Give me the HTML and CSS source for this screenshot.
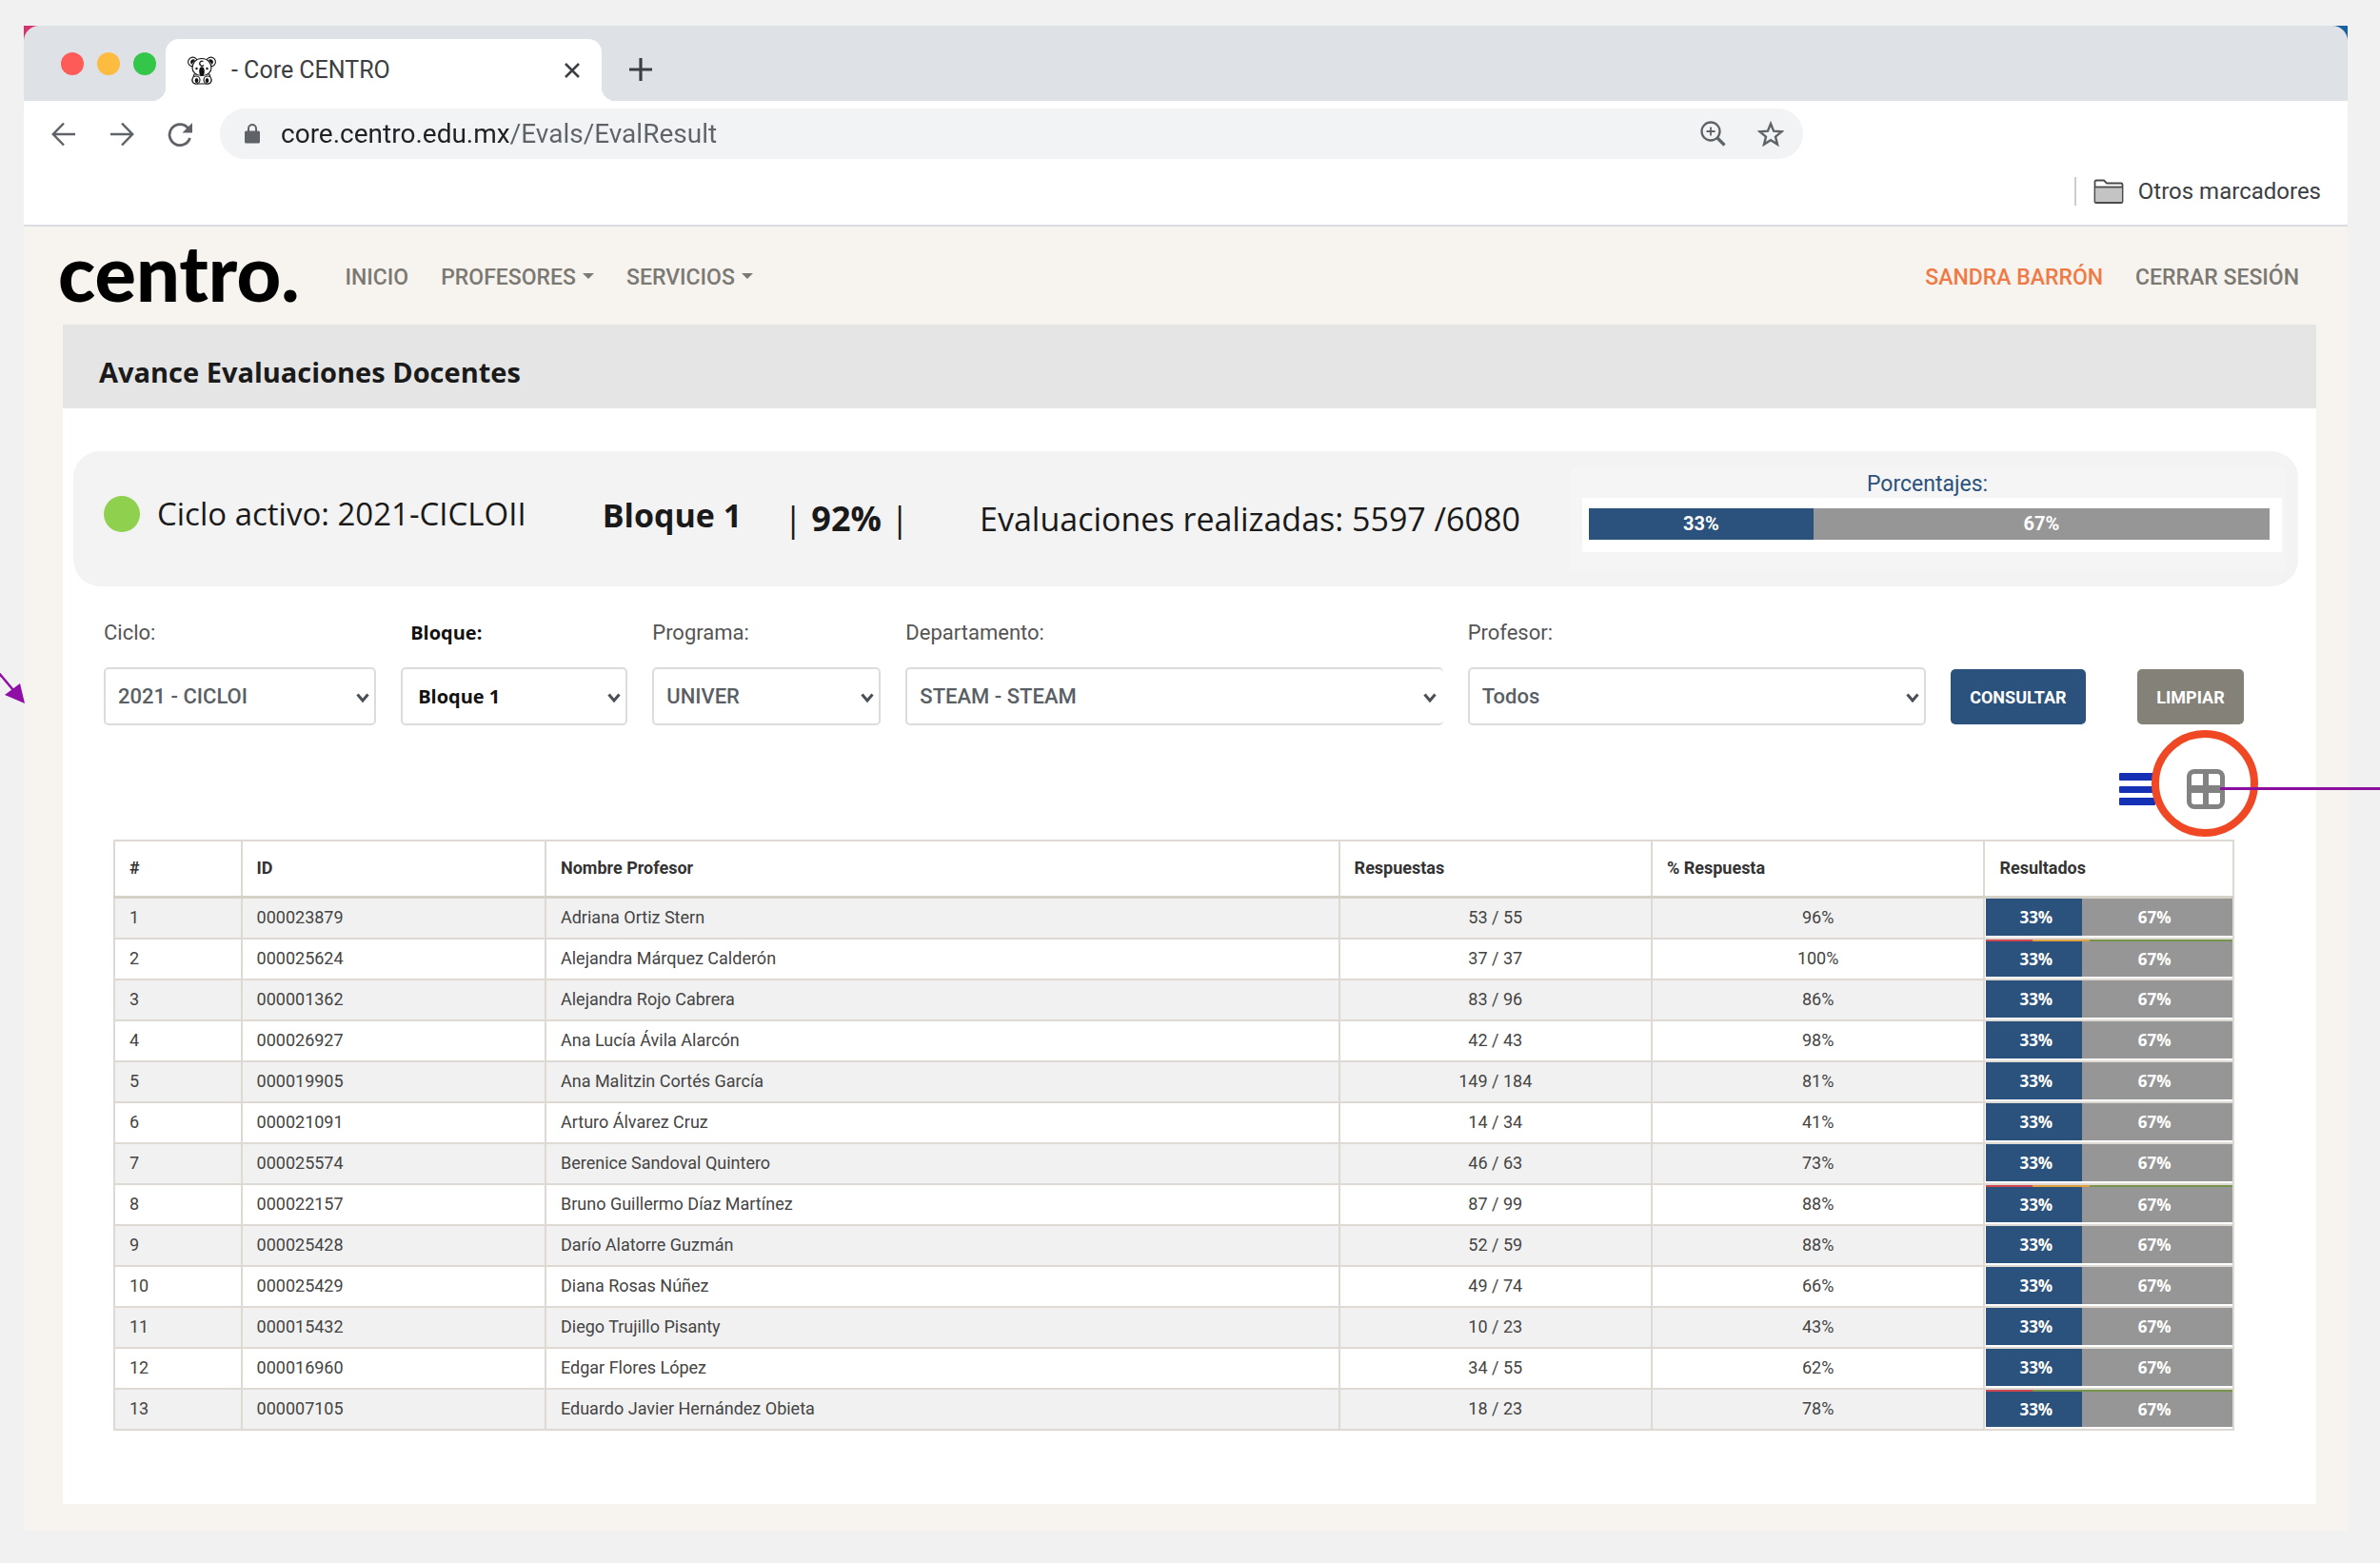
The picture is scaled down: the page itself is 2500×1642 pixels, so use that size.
FILE: index.html
```html
<!DOCTYPE html>
<html lang="es">
<head>
    <meta charset="UTF-8">
    <meta name="viewport" content="width=device-width, initial-scale=1.0">
    <title>- Core CENTRO</title>
    <link rel="stylesheet" href="styles.css">
</head>
<body>
    <svg class="arrow-in" viewBox="0 0 26 34" aria-hidden="true">
        <path d="M-2 1L14 20" stroke="#8f0fa6" stroke-width="2.5"/>
        <path d="M26 34L21 13L5 25Z" fill="#8f0fa6"/>
    </svg>

    <div class="window">
        <div class="titlebar">
            <div class="tab-strip">
                <div class="lights">
                    <span class="light red"></span>
                    <span class="light yellow"></span>
                    <span class="light green"></span>
                </div>
                <div class="tab">
                    <svg class="favicon" viewBox="0 0 30 30" aria-hidden="true">
                        <g fill="#fff" stroke="#111" stroke-width="1.1">
                            <circle cx="5.5" cy="6" r="4.9"/>
                            <circle cx="24.5" cy="6" r="4.9"/>
                            <path d="M7 19h16l2 6q0 4-4 4H9q-4 0-4-4z"/>
                            <path d="M15 2.5C8 2.5 5 8 5 12.500s4.500 8 10 8 10-3.500 10-8S22 2.500 15 2.500z"/>
                            <circle cx="9" cy="25" r="4"/>
                            <circle cx="21" cy="25" r="4"/>
                        </g>
                        <g fill="#111">
                            <path d="M3 6a3 3 0 0 1 5-2L4 9zM27 6a3 3 0 0 0-5-2l4 5z"/>
                            <ellipse cx="15" cy="16" rx="2.8" ry="4.8"/>
                            <circle cx="9.5" cy="13" r="1.2"/>
                            <circle cx="20.500" cy="13" r="1.200"/>
                            <ellipse cx="9.500" cy="25.500" rx="1.800" ry="2.600"/>
                            <ellipse cx="20.500" cy="25.500" rx="1.800" ry="2.600"/>
                        </g>
                        <path d="M16.500 5.500a2.500 2.500 0 1 0 .5 4" fill="none" stroke="#111" stroke-width="1.200"/>
                    </svg>
                    <span class="tab-title">- Core CENTRO</span>
                    <button class="icon-button" aria-label="Cerrar">
                        <svg width="16" height="16" viewBox="0 0 16 16"><path d="M1 1l14 14M15 1L1 15" stroke="#3c4043" stroke-width="2.500"/></svg>
                    </button>
                </div>
                <button class="icon-button new-tab" aria-label="Nueva pestaña">
                    <svg width="24" height="24" viewBox="0 0 24 24"><path d="M12 0v24M0 12h24" stroke="#3c4043" stroke-width="3.200"/></svg>
                </button>
            </div>
        </div>

        <div class="toolbar">
            <div class="nav-buttons">
                <button class="icon-button" aria-label="Atrás">
                    <svg width="26" height="26" viewBox="0 0 26 26" fill="none" stroke="#5f6368" stroke-width="2.500"><path d="M25 13H2M13 1.500L1.800 13L13 24.500"/></svg>
                </button>
                <button class="icon-button" aria-label="Adelante">
                    <svg width="26" height="26" viewBox="0 0 26 26" fill="none" stroke="#5f6368" stroke-width="2.500"><path d="M1 13h23M13 1.500L24.200 13L13 24.500"/></svg>
                </button>
                <button class="icon-button" aria-label="Recargar">
                    <svg width="26" height="26" viewBox="0 0 26 26"><path d="M21.500 6.500A11 11 0 1 0 23.500 17" fill="none" stroke="#5f6368" stroke-width="2.800"/><path d="M26 1v10.500H15.500z" fill="#5f6368"/></svg>
                </button>
            </div>
            <div class="omnibox">
                <svg width="16" height="21" viewBox="0 0 16 21" aria-hidden="true">
                    <rect y="7.500" width="16" height="13" rx="1.500" fill="#5f6368"/>
                    <path d="M4 8V5a4 4 0 0 1 8 0v3" fill="none" stroke="#5f6368" stroke-width="2"/>
                </svg>
                <input class="url" type="text" aria-label="Dirección" value="core.centro.edu.mx/Evals/EvalResult">
                <button class="icon-button" aria-label="Zoom">
                    <svg width="27" height="27" viewBox="0 0 27 27" fill="none" stroke="#5f6368"><circle cx="11" cy="11" r="9.500" stroke-width="2.300"/><path d="M18 18l7.500 7.500" stroke-width="3.200"/><path d="M11 6.500v9M6.500 11h9" stroke-width="1.800"/></svg>
                </button>
                <button class="icon-button" aria-label="Agregar a favoritos">
                    <svg width="28" height="28" viewBox="0 0 28 28"><path d="M14 3l3.100 7.700 8.300.600-6.400 5.300 2 8-7-4.400-7 4.400 2-8-6.400-5.300 8.300-.600z" fill="none" stroke="#5f6368" stroke-width="2.400"/></svg>
                </button>
            </div>
        </div>
        <div class="bookmarks">
            <a href="#" class="bookmark">
                <svg width="32" height="26" viewBox="0 0 32 26" aria-hidden="true">
                    <path d="M1.500 24V3q0-1.500 1.500-1.500h8l3 3h15q1.500 0 1.500 1.500v18q0 1-1.500 1H3q-1.500 0-1.500-1z" fill="#fff" stroke="#4a4a4a" stroke-width="1.800"/>
                    <path d="M2.400 9h27.200v15H2.400z" fill="#c4c4c4"/>
                    <path d="M1.500 8.500h29" stroke="#4a4a4a" stroke-width="1.800"/>
                </svg>
                Otros marcadores
            </a>
        </div>

        <div class="page">
            <nav class="site-nav">
                <a href="#" class="logo">centro.</a>
                <a href="#">INICIO</a>
                <a href="#" class="dropdown">PROFESORES</a>
                <a href="#" class="dropdown">SERVICIOS</a>
                <a href="#" class="user">SANDRA BARRÓN</a>
                <a href="#">CERRAR SESIÓN</a>
            </nav>

            <main class="panel">
                <h1>Avance Evaluaciones Docentes</h1>

                <section class="summary">
                    <span class="status-dot"></span>
                    <span class="cycle">Ciclo activo: 2021-CICLOII</span>
                    <strong class="block">Bloque 1</strong>
                    <span class="progress">| <strong>92%</strong> |</span>
                    <span class="done">Evaluaciones realizadas: 5597 /6080</span>
                    <div class="percentages">
                        <div class="percentages-title">Porcentajes:</div>
                        <div class="percentages-box">
                            <div class="bar">
                                <span class="bar-blue" style="width: 33%">33%</span>
                                <span class="bar-gray">67%</span>
                            </div>
                        </div>
                    </div>
                </section>

                <form class="filters">
                    <div class="field">
                        <label for="ciclo">Ciclo:</label>
                        <div class="select">
                            <select id="ciclo"><option>2021 - CICLOI</option></select>
                            <svg viewBox="0 0 14 10"><path d="M1.500 1.500L7 8l5.500-6.500"/></svg>
                        </div>
                    </div>
                    <div class="field field-bold">
                        <label for="bloque">Bloque:</label>
                        <div class="select">
                            <select id="bloque"><option>Bloque 1</option></select>
                            <svg viewBox="0 0 14 10"><path d="M1.500 1.500L7 8l5.500-6.500"/></svg>
                        </div>
                    </div>
                    <div class="field">
                        <label for="programa">Programa:</label>
                        <div class="select">
                            <select id="programa"><option>UNIVER</option></select>
                            <svg viewBox="0 0 14 10"><path d="M1.500 1.500L7 8l5.500-6.500"/></svg>
                        </div>
                    </div>
                    <div class="field">
                        <label for="departamento">Departamento:</label>
                        <div class="select open-right">
                            <select id="departamento"><option>STEAM - STEAM</option></select>
                            <svg viewBox="0 0 14 10"><path d="M1.500 1.500L7 8l5.500-6.500"/></svg>
                        </div>
                    </div>
                    <div class="field">
                        <label for="profesor">Profesor:</label>
                        <div class="select">
                            <select id="profesor"><option>Todos</option></select>
                            <svg viewBox="0 0 14 10"><path d="M1.500 1.500L7 8l5.500-6.500"/></svg>
                        </div>
                    </div>
                    <button type="button" class="btn">CONSULTAR</button>
                    <button type="button" class="btn btn-clear">LIMPIAR</button>
                </form>

                <div class="views">
                    <button class="icon-button" aria-label="Lista">
                        <svg width="38" height="34" viewBox="0 0 38 34" fill="#1430b4"><rect width="38" height="8" rx="1"/><rect y="14" width="38" height="7" rx="1"/><rect y="26" width="38" height="8" rx="1"/></svg>
                    </button>
                    <div class="grid-view">
                        <button class="icon-button" aria-label="Cuadrícula">
                            <svg width="40" height="42" viewBox="0 0 40 42">
                                <rect width="40" height="42" rx="8" fill="#828282"/>
                                <path d="M8 5h9v12H5V8q0-3 3-3zM23 5h9q3 0 3 3v9H23zM5 25h12v12H8q-3 0-3-3zM23 25h12v9q0 3-3 3h-9z" fill="#fff"/>
                            </svg>
                        </button>
                        <span class="ring"></span>
                        <span class="line-out"></span>
                    </div>
                </div>

                <table class="results">
                    <colgroup>
                        <col class="col-num"><col class="col-id"><col class="col-name"><col class="col-answers"><col class="col-percent"><col class="col-results">
                    </colgroup>
                    <thead>
                        <tr>
                            <th>#</th>
                            <th>ID</th>
                            <th>Nombre Profesor</th>
                            <th>Respuestas</th>
                            <th>% Respuesta</th>
                            <th>Resultados</th>
                        </tr>
                    </thead>
                    <tbody id="resultRows"></tbody>
                </table>
            </main>
        </div>
    </div>

    <script>
        // id, nombre, respuestas, % respuesta, borde de color
        const professors = [
            ['000023879', 'Adriana Ortiz Stern', '53 / 55', '96%'],
            ['000025624', 'Alejandra Márquez Calderón', '37 / 37', '100%', 'edge-three'],
            ['000001362', 'Alejandra Rojo Cabrera', '83 / 96', '86%'],
            ['000026927', 'Ana Lucía Ávila Alarcón', '42 / 43', '98%'],
            ['000019905', 'Ana Malitzin Cortés García', '149 / 184', '81%'],
            ['000021091', 'Arturo Álvarez Cruz', '14 / 34', '41%'],
            ['000025574', 'Berenice Sandoval Quintero', '46 / 63', '73%'],
            ['000022157', 'Bruno Guillermo Díaz Martínez', '87 / 99', '88%', 'edge-three'],
            ['000025428', 'Darío Alatorre Guzmán', '52 / 59', '88%'],
            ['000025429', 'Diana Rosas Núñez', '49 / 74', '66%'],
            ['000015432', 'Diego Trujillo Pisanty', '10 / 23', '43%'],
            ['000016960', 'Edgar Flores López', '34 / 55', '62%'],
            ['000007105', 'Eduardo Javier Hernández Obieta', '18 / 23', '78%', 'edge-two']
        ];

        document.getElementById('resultRows').innerHTML = professors.map((p, i) => `
            <tr>
                <td>${i + 1}</td>
                <td>${p[0]}</td>
                <td>${p[1]}</td>
                <td class="center">${p[2]}</td>
                <td class="center">${p[3]}</td>
                <td class="result">
                    <div class="bar ${p[4] || ''}">
                        <span class="bar-blue">33%</span>
                        <span class="bar-gray">67%</span>
                    </div>
                </td>
            </tr>`).join('');
    </script>
</body>
</html>
```
FILE: styles.css
```css
* {
    box-sizing: border-box;
}
body {
    margin: 0;
    padding: 27px 34px 34px 25px;
    position: relative;
    overflow-x: hidden;
    background-color: #f1f1f1;
    font-family: Roboto, "Liberation Sans", sans-serif;
    color: #1a1a1a;
}
a {
    color: inherit;
    text-decoration: none;
}
button, input, select {
    font-family: inherit;
}
.icon-button {
    display: flex;
    padding: 0;
    border: none;
    background: none;
}
.arrow-in {
    position: absolute;
    left: 0;
    top: 705px;
    width: 26px;
    height: 34px;
    z-index: 2;
}

/* browser */
.titlebar {
    background: linear-gradient(to right, #d6336c 50%, #17639f 50%);
}
.tab-strip {
    display: flex;
    height: 79px;
    padding-left: 39px;
    background-color: #dee1e6;
    border-radius: 16px 16px 0 0;
}
.lights {
    display: flex;
    gap: 14px;
    margin-top: 28px;
    width: 110px;
}
.light {
    width: 24px;
    height: 24px;
    border-radius: 50%;
}
.red {
    background-color: #fc5b57;
}
.yellow {
    background-color: #fdbc40;
}
.green {
    background-color: #34c648;
}
.tab {
    position: relative;
    display: flex;
    align-items: center;
    width: 458px;
    margin-top: 14px;
    padding: 0 23px;
    background-color: #fff;
    border-radius: 14px 14px 0 0;
}
.tab::before, .tab::after {
    content: "";
    position: absolute;
    bottom: 0;
    width: 14px;
    height: 14px;
}
.tab::before {
    right: 100%;
    background: radial-gradient(circle at 0 0, transparent 14px, #fff 14px);
}
.tab::after {
    left: 100%;
    background: radial-gradient(circle at 100% 0, transparent 14px, #fff 14px);
}
.favicon {
    width: 30px;
    height: 30px;
}
.tab-title {
    flex: 1;
    margin-left: 16px;
    font-size: 25px;
    color: #3c4043;
}
.new-tab {
    margin: 34px 0 0 29px;
}
.toolbar {
    display: flex;
    align-items: center;
    padding: 8px 572px 8px 29px;
    background-color: #fff;
}
.nav-buttons {
    display: flex;
    gap: 35px;
    width: 177px;
}
.omnibox {
    flex: 1;
    display: flex;
    align-items: center;
    height: 53px;
    padding: 0 20px 0 26px;
    background-color: #f1f3f4;
    border-radius: 27px;
}
.omnibox .icon-button {
    margin-left: 33px;
}
.url {
    flex: 1;
    margin-left: 22px;
    padding: 0;
    border: none;
    font-size: 28px;
    line-height: 36px;
    color: transparent;
    background: linear-gradient(to right, #202124 242px, #5f6368 242px);
    -webkit-background-clip: text;
    background-clip: text;
}
.bookmarks {
    display: flex;
    justify-content: flex-end;
    padding: 11px 28px 20px;
    background-color: #fff;
    border-bottom: 2px solid #dadcdf;
}
.bookmark {
    display: flex;
    align-items: center;
    gap: 15px;
    padding-left: 18px;
    border-left: 2px solid #ccc;
    font-size: 24px;
    line-height: 30px;
    color: #3c4043;
}

/* site */
.page {
    padding: 0 33px 28px 41px;
    background-color: #f7f4ef;
}
.site-nav {
    display: flex;
    align-items: center;
    gap: 34px;
    height: 103px;
    padding: 3px 18px 0 0;
    font-size: 23px;
    font-weight: 500;
    color: #7b7974;
}
.logo {
    margin: 0 14px 0 -5px;
    padding-bottom: 11px;
    font-family: Lato, sans-serif;
    font-size: 81px;
    font-weight: 900;
    line-height: 88px;
    color: #000;
}
.dropdown::after {
    content: "";
    display: inline-block;
    margin-left: 7px;
    vertical-align: 6px;
    border: 6px solid transparent;
    border-top-color: #7b7974;
    border-bottom: 0;
}
.user {
    margin-left: auto;
    color: #f07a45;
}
.panel {
    padding-bottom: 77px;
    background-color: #fff;
}
h1 {
    margin: 0;
    padding: 32px 38px 20px;
    background-color: #e5e5e5;
    font-family: "Open Sans", sans-serif;
    font-size: 29px;
    font-weight: 700;
    line-height: 36px;
}
.summary {
    display: flex;
    align-items: center;
    height: 142px;
    margin: 45px 19px 35px 11px;
    padding: 0 14px 0 32px;
    background-color: #f3f3f3;
    border-radius: 28px;
    font-family: "Open Sans", sans-serif;
    font-size: 34px;
    line-height: 48px;
    white-space: nowrap;
}
.status-dot {
    width: 38px;
    height: 38px;
    margin-right: 18px;
    margin-bottom: 10px;
    border-radius: 50%;
    background-color: #8fd14f;
}
.cycle {
    margin-bottom: 10px;
    font-size: 33px;
}
.block {
    margin-left: 80px;
    margin-bottom: 8px;
}
.progress {
    margin-left: 44px;
    font-size: 36px;
}
.done {
    margin-left: 74px;
}
.percentages {
    width: 750px;
    margin-left: auto;
    padding: 4px 3px 20px 12px;
    background-color: #f5f5f5;
    font-family: Roboto, sans-serif;
    text-align: center;
}
.percentages-title {
    padding-right: 10px;
    font-size: 23px;
    line-height: 28px;
    color: #2b527d;
}
.percentages-box {
    padding: 11px 13px 13px 7px;
    background-color: #fff;
}
.bar {
    display: flex;
    color: #fff;
    font-weight: 700;
    text-align: center;
}
.bar-blue {
    background-color: #2b527d;
}
.bar-gray {
    flex: 1;
    background-color: #969696;
}
.percentages .bar {
    font-size: 20px;
    line-height: 33px;
}

/* filters */
.filters {
    display: grid;
    grid-template-columns: 286fr 238fr 240fr 564fr 481fr 142fr 140fr;
    gap: 26px;
    align-items: end;
    margin: 0 76px 0 43px;
}
.field label {
    display: block;
    margin-bottom: 22px;
    font-size: 22px;
    line-height: 28px;
    color: #555;
}
.select {
    position: relative;
}
.select select {
    width: 100%;
    height: 61px;
    padding: 0 13px;
    appearance: none;
    border: 2px solid #dcdcdc;
    border-radius: 5px;
    background-color: #fff;
    font-size: 22px;
    font-weight: 500;
    color: #5a5f66;
}
.select svg {
    position: absolute;
    right: 7px;
    top: 27px;
    width: 14px;
    height: 10px;
    fill: none;
    stroke: #4b5056;
    stroke-width: 3;
}
.select.open-right select {
    border-right: none;
}
.field-bold label, .field-bold select {
    font-family: "Open Sans", sans-serif;
    font-size: 20px;
    font-weight: 700;
    color: #111;
}
.field-bold label {
    padding-left: 10px;
}
.field-bold select {
    padding: 0 16px;
}
.btn {
    height: 58px;
    margin-bottom: 1px;
    padding: 0;
    border: none;
    border-radius: 5px;
    background-color: #2b527d;
    color: #fff;
    font-size: 18px;
    font-weight: 700;
}
.btn-clear {
    width: 112px;
    justify-self: end;
    background-color: #848179;
}
.views {
    display: flex;
    justify-content: flex-end;
    align-items: center;
    gap: 33px;
    margin: 46px 96px 32px 0;
}
.grid-view {
    position: relative;
}
.ring {
    position: absolute;
    left: -37px;
    top: -41px;
    width: 112px;
    height: 112px;
    border: 8px solid #f04824;
    border-radius: 50%;
    pointer-events: none;
}
.line-out {
    position: absolute;
    left: 35px;
    top: 19px;
    width: 170px;
    height: 3px;
    background-color: #8a0f9e;
}

/* results */
.results {
    width: calc(100% - 139px);
    margin-left: 53px;
    table-layout: fixed;
    border-collapse: collapse;
    font-size: 18px;
    line-height: 20px;
    color: #444;
}
.col-num {
    width: 6%;
}
.col-id {
    width: 14.35%;
}
.col-name {
    width: 37.45%;
}
.col-answers {
    width: 14.75%;
}
.col-percent {
    width: 15.7%;
}
.results th, .results td {
    height: 43px;
    padding: 0 15px;
    border: 2px solid #dedad3;
    text-align: left;
}
.results th {
    height: 59px;
    color: #333;
    font-weight: 700;
    border-bottom: 3px solid #d6d1c6;
}
.results tbody tr:nth-child(odd) {
    background-color: #f1f1f1;
}
.results .center {
    text-align: center;
}
.results .result {
    padding: 0 0 2px 1px;
    background-color: #fff;
}
.result .bar {
    font-family: "Open Sans", sans-serif;
    font-size: 17px;
    line-height: 39px;
}
.result .bar-blue {
    width: 39%;
    padding-left: 4px;
}
.result .bar-gray {
    padding-right: 6px;
}
.edge-three, .edge-two {
    padding-top: 2px;
}
.edge-three {
    background: linear-gradient(to right, #cf4550 19%, #e0a040 19% 42%, #76954a 42%);
}
.edge-two {
    background: linear-gradient(to right, #cf4550 19%, #76954a 19%);
}
.result .edge-three, .result .edge-two {
    line-height: 37px;
}
```
